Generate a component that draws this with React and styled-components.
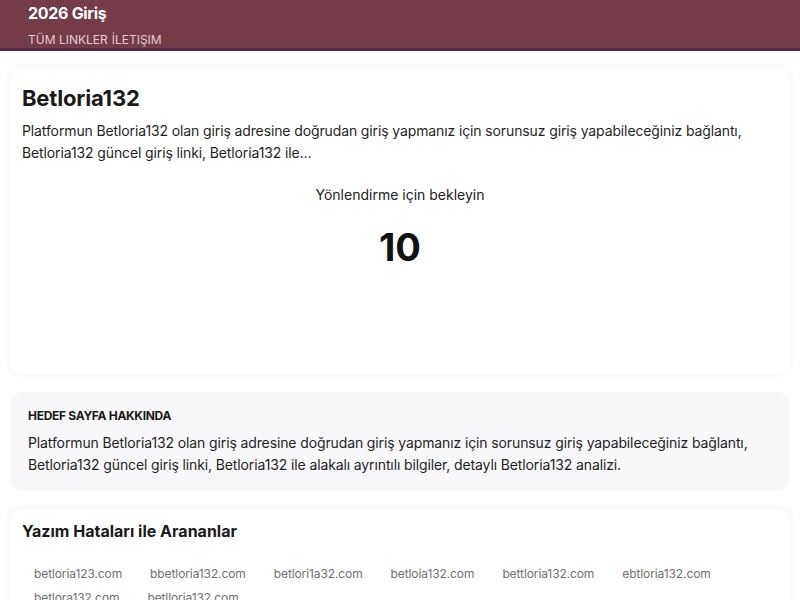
import React from "react";
import styled, { createGlobalStyle } from "styled-components";

const GlobalStyle = createGlobalStyle`
  body {
    margin: 0;
    background: #ffffff;
    font-family: Inter, "Noto Sans", sans-serif;
    color: #1a1a1a;
  }
`;

const Header = styled.header`
  background: #733c48;
  border-bottom: 3px solid #4f2c48;
  padding: 3px 28px 0;
  height: 51px;
  box-sizing: border-box;
`;

const SiteTitle = styled.div`
  color: #ffffff;
  font-size: 16px;
  font-weight: 700;
  line-height: 20px;
  letter-spacing: -0.3px;
`;

const Nav = styled.nav`
  display: flex;
  gap: 4px;
  margin-top: 9px;
`;

const NavLink = styled.span`
  color: #e6cbd3;
  font-size: 12px;
  line-height: 16px;
`;

const Main = styled.main`
  padding: 16px 10px 0;
  display: flex;
  flex-direction: column;
  gap: 18px;
`;

const Card = styled.section`
  background: #ffffff;
  border-radius: 12px;
  box-shadow: 0 0 8px rgba(0, 0, 0, 0.06);
  padding: ${(p) => p.$padding || "12px"};
`;

const InfoBox = styled.section`
  background: #f8f8fa;
  border-radius: 12px;
  padding: 16px 18px 15px;
`;

const Title = styled.h1`
  margin: 0;
  font-size: 22px;
  line-height: 28px;
  font-weight: 700;
  letter-spacing: -0.2px;
`;

const Text = styled.p`
  margin: ${(p) => p.$margin || "0"};
  font-size: 14px;
  line-height: 22px;
  color: #1f1f1f;
  letter-spacing: -0.12px;
`;

const Redirect = styled.div`
  display: flex;
  flex-direction: column;
  align-items: center;
  padding: 22px 0 93px;
`;

const RedirectLabel = styled.div`
  font-size: 14px;
  line-height: 18px;
  color: #222;
`;

const Counter = styled.div`
  margin-top: 21px;
  font-size: 38px;
  line-height: 44px;
  font-weight: 700;
  color: #111;
`;

const SmallHeading = styled.h3`
  margin: 0;
  font-size: 12px;
  line-height: 16px;
  font-weight: 700;
  text-transform: uppercase;
  letter-spacing: -0.3px;
`;

const SectionTitle = styled.h2`
  margin: 0;
  font-size: 16px;
  line-height: 20px;
  font-weight: 700;
`;

const Tags = styled.div`
  display: flex;
  flex-wrap: wrap;
  gap: 4px 4px;
  margin-top: 23px;
`;

const Tag = styled.span`
  padding: 3px 12px;
  font-size: 12px;
  line-height: 14px;
  color: #707070;
  letter-spacing: -0.1px;
`;

const typos = [
  "betloria123.com",
  "bbetloria132.com",
  "betlori1a32.com",
  "betloia132.com",
  "bettloria132.com",
  "ebtloria132.com",
  "betlora132.com",
  "betlloria132.com",
];

export default function App() {
  return (
    <>
      <GlobalStyle />
      <Header>
        <SiteTitle>2026 Giriş</SiteTitle>
        <Nav>
          <NavLink>TÜM LINKLER</NavLink>
          <NavLink>İLETIŞIM</NavLink>
        </Nav>
      </Header>
      <Main>
        <Card $padding="17px 12px 12px">
          <Title>Betloria132</Title>
          <Text $margin="8px 0 0">
            Platformun Betloria132 olan giriş adresine doğrudan giriş yapmanız için sorunsuz giriş yapabileceğiniz bağlantı,
            Betloria132 güncel giriş linki, Betloria132 ile...
          </Text>
          <Redirect>
            <RedirectLabel>Yönlendirme için bekleyin</RedirectLabel>
            <Counter>10</Counter>
          </Redirect>
        </Card>
        <InfoBox>
          <SmallHeading>Hedef Sayfa Hakkında</SmallHeading>
          <Text $margin="8px 0 0">
            Platformun Betloria132 olan giriş adresine doğrudan giriş yapmanız için sorunsuz giriş yapabileceğiniz bağlantı,
            Betloria132 güncel giriş linki, Betloria132 ile alakalı ayrıntılı bilgiler, detaylı Betloria132 analizi.
          </Text>
        </InfoBox>
        <Card $padding="12px 12px 12px">
          <SectionTitle>Yazım Hataları ile Arananlar</SectionTitle>
          <Tags>
            {typos.map((t) => (
              <Tag key={t}>{t}</Tag>
            ))}
          </Tags>
        </Card>
      </Main>
    </>
  );
}
